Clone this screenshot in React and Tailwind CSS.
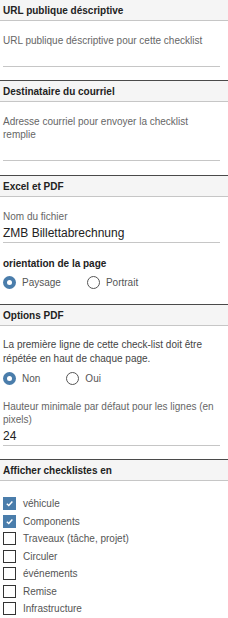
import React from 'react';

function Header({ title, first }) {
  return (
    <div
      className={`h-[21px] bg-[#f5f5f5] border-b border-[#c6c6c6] px-[3px] flex items-center text-[10px] font-bold text-[#222] ${
        first ? '' : 'border-t border-t-[#4a4a4a] h-[22px]'
      }`}
    >
      {title}
    </div>
  );
}

function Underline({ value }) {
  return (
    <div className="h-[20px] border-b border-[#c6c6c6] flex items-center text-[12px] text-[#222] leading-none">
      {value}
    </div>
  );
}

function Radio({ checked, label }) {
  return (
    <label className="flex items-center gap-[6px] h-[13px]">
      {checked ? (
        <span className="w-[13px] h-[13px] rounded-full bg-[#4a7dab] flex items-center justify-center">
          <span className="w-[5px] h-[5px] rounded-full bg-white" />
        </span>
      ) : (
        <span className="w-[13px] h-[13px] rounded-full border border-[#555] bg-white" />
      )}
      <span className="text-[10px] text-[#555]">{label}</span>
    </label>
  );
}

function Check({ checked, label }) {
  return (
    <div className="flex items-center gap-[7px] h-[17.5px]">
      {checked ? (
        <span className="w-[13px] h-[13px] bg-[#4a7dab] flex items-center justify-center">
          <svg width="9" height="9" viewBox="0 0 10 10">
            <path d="M2 5.2 L4.2 7.3 L8.2 2.8" fill="none" stroke="white" strokeWidth="1.6" />
          </svg>
        </span>
      ) : (
        <span className="w-[13px] h-[13px] border border-[#333] bg-white" />
      )}
      <span className="text-[10px] text-[#555]">{label}</span>
    </div>
  );
}

export default function App() {
  const cats = [
    ['véhicule', true],
    ['Components', true],
    ['Traveaux (tâche, projet)', false],
    ['Circuler', false],
    ['événements', false],
    ['Remise', false],
    ['Infrastructure', false],
  ];

  return (
    <div className="w-[228px] h-[618px] overflow-hidden bg-white font-['Liberation_Sans',Arial,sans-serif]">
      {/* URL */}
      <Header title="URL publique déscriptive" first />
      <div className="pl-[3px] pr-[8px] pt-[13px] pb-[13px]">
        <div className="text-[10px] leading-[13px] text-[#666]">URL publique déscriptive pour cette checklist</div>
        <Underline value="" />
      </div>

      {/* Courriel */}
      <Header title="Destinataire du courriel" />
      <div className="pl-[3px] pr-[8px] pt-[13px] pb-[14px]">
        <div className="text-[10px] leading-[13px] text-[#666]">
          Adresse courriel pour envoyer la checklist remplie
        </div>
        <Underline value="" />
      </div>

      {/* Excel et PDF */}
      <Header title="Excel et PDF" />
      <div className="pl-[3px] pr-[8px] pt-[13px] pb-[15px]">
        <div className="text-[10px] leading-[13px] text-[#666]">Nom du fichier</div>
        <Underline value="ZMB Billettabrechnung" />
        <div className="mt-[14px] text-[10px] leading-[13px] font-bold text-[#222]">orientation de la page</div>
        <div className="mt-[6px] flex items-center gap-[26px]">
          <Radio checked label="Paysage" />
          <Radio label="Portrait" />
        </div>
      </div>

      {/* Options PDF */}
      <Header title="Options PDF" />
      <div className="pl-[3px] pr-[8px] pt-[12px] pb-[13px]">
        <div className="text-[10px] leading-[13.5px] text-[#444]">
          La première ligne de cette check-list doit être répétée en haut de chaque page.
        </div>
        <div className="mt-[7px] flex items-center gap-[26px]">
          <Radio checked label="Non" />
          <Radio label="Oui" />
        </div>
        <div className="mt-[15px] text-[10px] leading-[13px] text-[#666]">
          Hauteur minimale par défaut pour les lignes (en pixels)
        </div>
        <Underline value="24" />
      </div>

      {/* Afficher */}
      <Header title="Afficher checklistes en" />
      <div className="pl-[3px] pr-[8px] pt-[14px]">
        {cats.map(([label, checked]) => (
          <Check key={label} label={label} checked={checked} />
        ))}
      </div>
    </div>
  );
}
